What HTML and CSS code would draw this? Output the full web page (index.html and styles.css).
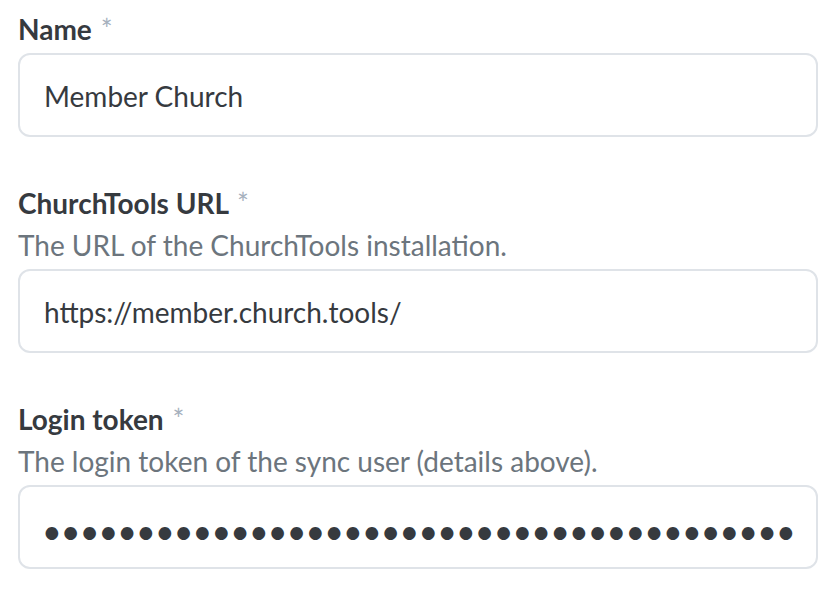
FILE: index.html
```html
<!DOCTYPE html>
<html lang="en">
<head>
    <meta charset="UTF-8">
    <meta name="viewport" content="width=device-width, initial-scale=1.0">
    <title>Sync Settings</title>
    <link rel="stylesheet" href="styles.css">
</head>
<body>
    <form class="settings-form">
        <!-- Name -->
        <div class="field">
            <label class="field-label" for="name">Name <span class="required">*</span></label>
            <input class="field-input" id="name" type="text" value="Member Church">
        </div>

        <!-- ChurchTools URL -->
        <div class="field">
            <label class="field-label" for="url">ChurchTools URL <span class="required">*</span></label>
            <div class="field-help">The URL of the ChurchTools installation.</div>
            <input class="field-input" id="url" type="text" value="https://member.church.tools/">
        </div>

        <!-- Login token -->
        <div class="field">
            <label class="field-label" for="token">Login token <span class="required">*</span></label>
            <div class="field-help">The login token of the sync user (details above).</div>
            <input class="field-input field-secret" id="token" type="password" value="aaaaaaaaaaaaaaaaaaaaaaaaaaaaaaaaaaaaaaaaaaaaaa">
        </div>
    </form>
</body>
</html>
```

FILE: styles.css
```css
/* Basic page */
body {
    font-family: Lato, "Open Sans", sans-serif;
    margin: 0;
    padding: 8px 22px 0 18px;
    background-color: #fff;
    color: #363a3f;
}
/* Form fields */
.field {
    margin-bottom: 45px;
}
.field-label {
    display: block;
    font-size: 28px;
    font-weight: bold;
    line-height: 42px;
}
.required {
    color: #a5b0bd;
    font-weight: normal;
    margin-left: 2px;
}
.field-help {
    font-size: 28px;
    line-height: 42px;
    color: #6c757d;
}
.field-input {
    display: block;
    box-sizing: border-box;
    width: 100%;
    height: 84px;
    margin-top: 3px;
    padding: 2px 24px 0;
    border: 2px solid #dfe3e8;
    border-radius: 12px;
    font-family: inherit;
    font-size: 28px;
    color: #363a3f;
    background-color: #fff;
    outline: none;
}
.field-secret {
    font-size: 34px;
    letter-spacing: -0.9px;
    padding: 7px 20px 0 22px;
}
```
